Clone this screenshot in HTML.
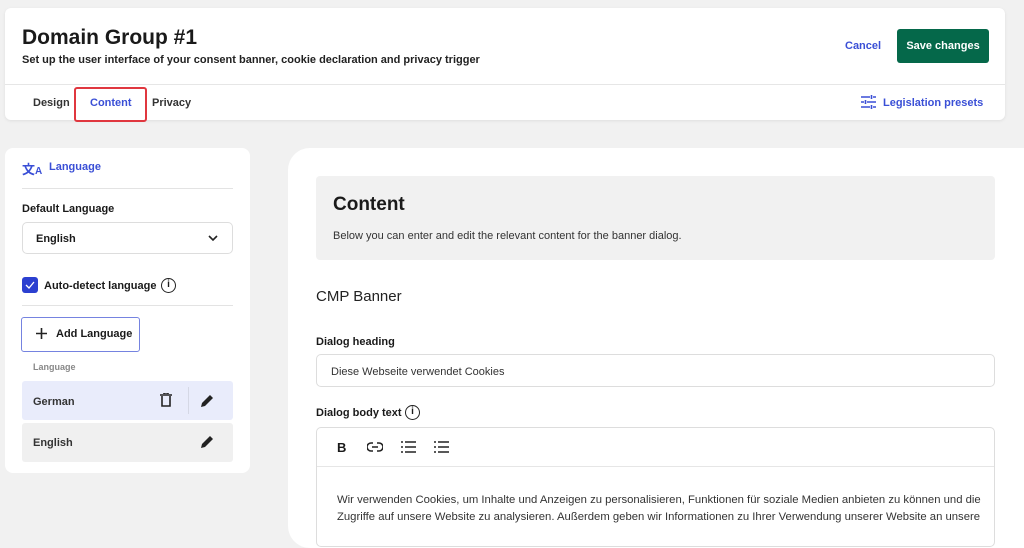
<!DOCTYPE html>
<html><head><meta charset="utf-8"><style>
*{box-sizing:border-box;margin:0;padding:0}
body{width:1024px;height:526px;overflow:hidden;background:#f1f1f1;font-family:"Liberation Sans",sans-serif;color:#1a1a1a;position:relative}
.abs{position:absolute}
.b{font-weight:bold}
</style></head><body>
<div class="abs" style="left:5px;top:8px;width:1000px;height:112px;background:#fff;border-radius:6px;box-shadow:0 1px 3px rgba(0,0,0,.08)"></div>
<div class="abs" style="left:5px;top:84px;width:1000px;height:1px;background:#e6e6e6"></div>
<div class="abs b" style="left:22px;top:26px;font-size:21px">Domain Group #1</div>
<div class="abs b" style="left:22px;top:54px;font-size:11px;color:#222">Set up the user interface of your consent banner, cookie declaration and privacy trigger</div>
<div class="abs b" style="left:845px;top:40px;font-size:11px;color:#3a4fd6">Cancel</div>
<div class="abs b" style="left:897px;top:29px;width:92px;height:34px;background:#05684a;border-radius:3px;color:#fff;font-size:11px;line-height:34px;text-align:center">Save changes</div>
<div class="abs b" style="left:33px;top:97px;font-size:11px;color:#333">Design</div>
<div class="abs" style="left:74px;top:87px;width:73px;height:35px;border:2px solid #e0373f;border-radius:3px"></div>
<div class="abs b" style="left:90px;top:97px;font-size:11px;color:#3a4fd6">Content</div>
<div class="abs b" style="left:152px;top:97px;font-size:11px;color:#333">Privacy</div>
<svg class="abs" style="left:861px;top:95px" width="15" height="14" viewBox="0 0 15 14" stroke="#3a4fd6" stroke-width="1.6" fill="none"><path d="M0 2h9M12 2h3M10.5 0v4M0 7h3M6 7h9M4.5 5v4M0 12h9M12 12h3M10.5 10v4"/></svg>
<div class="abs b" style="left:883px;top:97px;font-size:11px;color:#3a4fd6">Legislation presets</div>

<div class="abs" style="left:5px;top:148px;width:245px;height:325px;background:#fff;border-radius:8px"></div>
<div class="abs b" style="left:22px;top:159px;font-size:13px;color:#3a4fd6;font-family:'Liberation Sans','Noto Sans CJK JP',sans-serif">文<span style="font-size:10px">A</span></div>
<div class="abs b" style="left:49px;top:161px;font-size:11px;color:#3a4fd6">Language</div>
<div class="abs" style="left:22px;top:188px;width:211px;height:1px;background:#e3e3e3"></div>
<div class="abs b" style="left:22px;top:203px;font-size:11px">Default Language</div>
<div class="abs" style="left:22px;top:222px;width:211px;height:32px;border:1px solid #ddd;border-radius:5px"></div>
<div class="abs b" style="left:36px;top:233px;font-size:11px">English</div>
<svg class="abs" style="left:208px;top:235px" width="10" height="7"><path d="M1 1l4 4 4-4" stroke="#222" stroke-width="1.6" fill="none"/></svg>
<div class="abs" style="left:22px;top:277px;width:16px;height:16px;background:#2b3fd0;border-radius:3px"></div>
<svg class="abs" style="left:25px;top:281px" width="10" height="8"><path d="M1 4l3 3 5-6" stroke="#fff" stroke-width="1.3" fill="none"/></svg>
<div class="abs b" style="left:44px;top:280px;font-size:11px">Auto-detect language</div>
<div class="abs" style="left:161px;top:278px;width:15px;height:15px;border:1.5px solid #222;border-radius:50%;font-size:10px;text-align:center;line-height:12px;font-weight:bold">i</div>
<div class="abs" style="left:22px;top:305px;width:211px;height:1px;background:#e3e3e3"></div>
<div class="abs" style="left:21px;top:317px;width:119px;height:35px;border:1px solid #7583e0;border-radius:3px"></div>
<svg class="abs" style="left:36px;top:328px" width="11" height="11" stroke="#222" stroke-width="1.6"><path d="M5.5 0v11M0 5.5h11"/></svg>
<div class="abs b" style="left:56px;top:328px;font-size:11px">Add Language</div>
<div class="abs b" style="left:33px;top:362px;font-size:9px;color:#888">Language</div>
<div class="abs" style="left:22px;top:381px;width:211px;height:39px;background:#e9ecfb;border-radius:3px"></div>
<div class="abs" style="left:188px;top:387px;width:1px;height:27px;background:#d5d8e5"></div>
<div class="abs b" style="left:33px;top:396px;font-size:11px;color:#333">German</div>
<svg class="abs" style="left:160px;top:393px" width="12" height="14" fill="none" stroke="#222" stroke-width="1.6"><path d="M0 2h12M4 1V0h4v1M2 3v10h8V3"/></svg>
<svg class="abs" style="left:200px;top:393px" width="15" height="15"><path d="M1 14l1-4 8-8 3 3-8 8z" fill="#222"/></svg>
<div class="abs" style="left:22px;top:423px;width:211px;height:39px;background:#f0f0f0;border-radius:3px"></div>
<div class="abs b" style="left:33px;top:437px;font-size:11px;color:#333">English</div>
<svg class="abs" style="left:200px;top:434px" width="15" height="15"><path d="M1 14l1-4 8-8 3 3-8 8z" fill="#222"/></svg>

<div class="abs" style="left:288px;top:148px;width:760px;height:400px;background:#fff;border-radius:22px"></div>
<div class="abs" style="left:316px;top:176px;width:679px;height:84px;background:#f1f1f1;border-radius:4px"></div>
<div class="abs b" style="left:333px;top:194px;font-size:19px">Content</div>
<div class="abs" style="left:333px;top:230px;font-size:11px;color:#333">Below you can enter and edit the relevant content for the banner dialog.</div>
<div class="abs" style="left:316px;top:288px;font-size:15px;color:#222">CMP Banner</div>
<div class="abs b" style="left:316px;top:336px;font-size:11px">Dialog heading</div>
<div class="abs" style="left:316px;top:354px;width:679px;height:33px;border:1px solid #ddd;border-radius:5px"></div>
<div class="abs" style="left:331px;top:366px;font-size:11px;color:#333">Diese Webseite verwendet Cookies</div>
<div class="abs b" style="left:316px;top:407px;font-size:11px">Dialog body text</div>
<div class="abs" style="left:405px;top:405px;width:15px;height:15px;border:1.5px solid #222;border-radius:50%;font-size:10px;text-align:center;line-height:12px;font-weight:bold">i</div>
<div class="abs" style="left:316px;top:427px;width:679px;height:120px;border:1px solid #ddd;border-radius:5px"></div>
<div class="abs" style="left:317px;top:466px;width:677px;height:1px;background:#e6e6e6"></div>
<div class="abs b" style="left:337px;top:440px;font-size:13px">B</div>
<svg class="abs" style="left:367px;top:442px" width="16" height="10" fill="none" stroke="#222" stroke-width="1.6"><path d="M6 1H4a4 4 0 000 8h2M10 1h2a4 4 0 010 8h-2M5 5h6"/></svg>
<svg class="abs" style="left:401px;top:441px" width="15" height="12" stroke="#222" stroke-width="1.6"><path d="M0 1h2M0 6h2M0 11h2M4 1h11M4 6h11M4 11h11"/></svg>
<svg class="abs" style="left:434px;top:441px" width="15" height="12" stroke="#222" stroke-width="1.6"><path d="M0 1h2M0 6h2M0 11h2M4 1h11M4 6h11M4 11h11"/></svg>
<div class="abs" style="left:337px;top:492px;font-size:11.3px;color:#333;line-height:17px;width:650px">Wir verwenden Cookies, um Inhalte und Anzeigen zu personalisieren, Funktionen für soziale Medien anbieten zu können und die Zugriffe auf unsere Website zu analysieren. Außerdem geben wir Informationen zu Ihrer Verwendung unserer Website an unsere</div>
</body></html>
